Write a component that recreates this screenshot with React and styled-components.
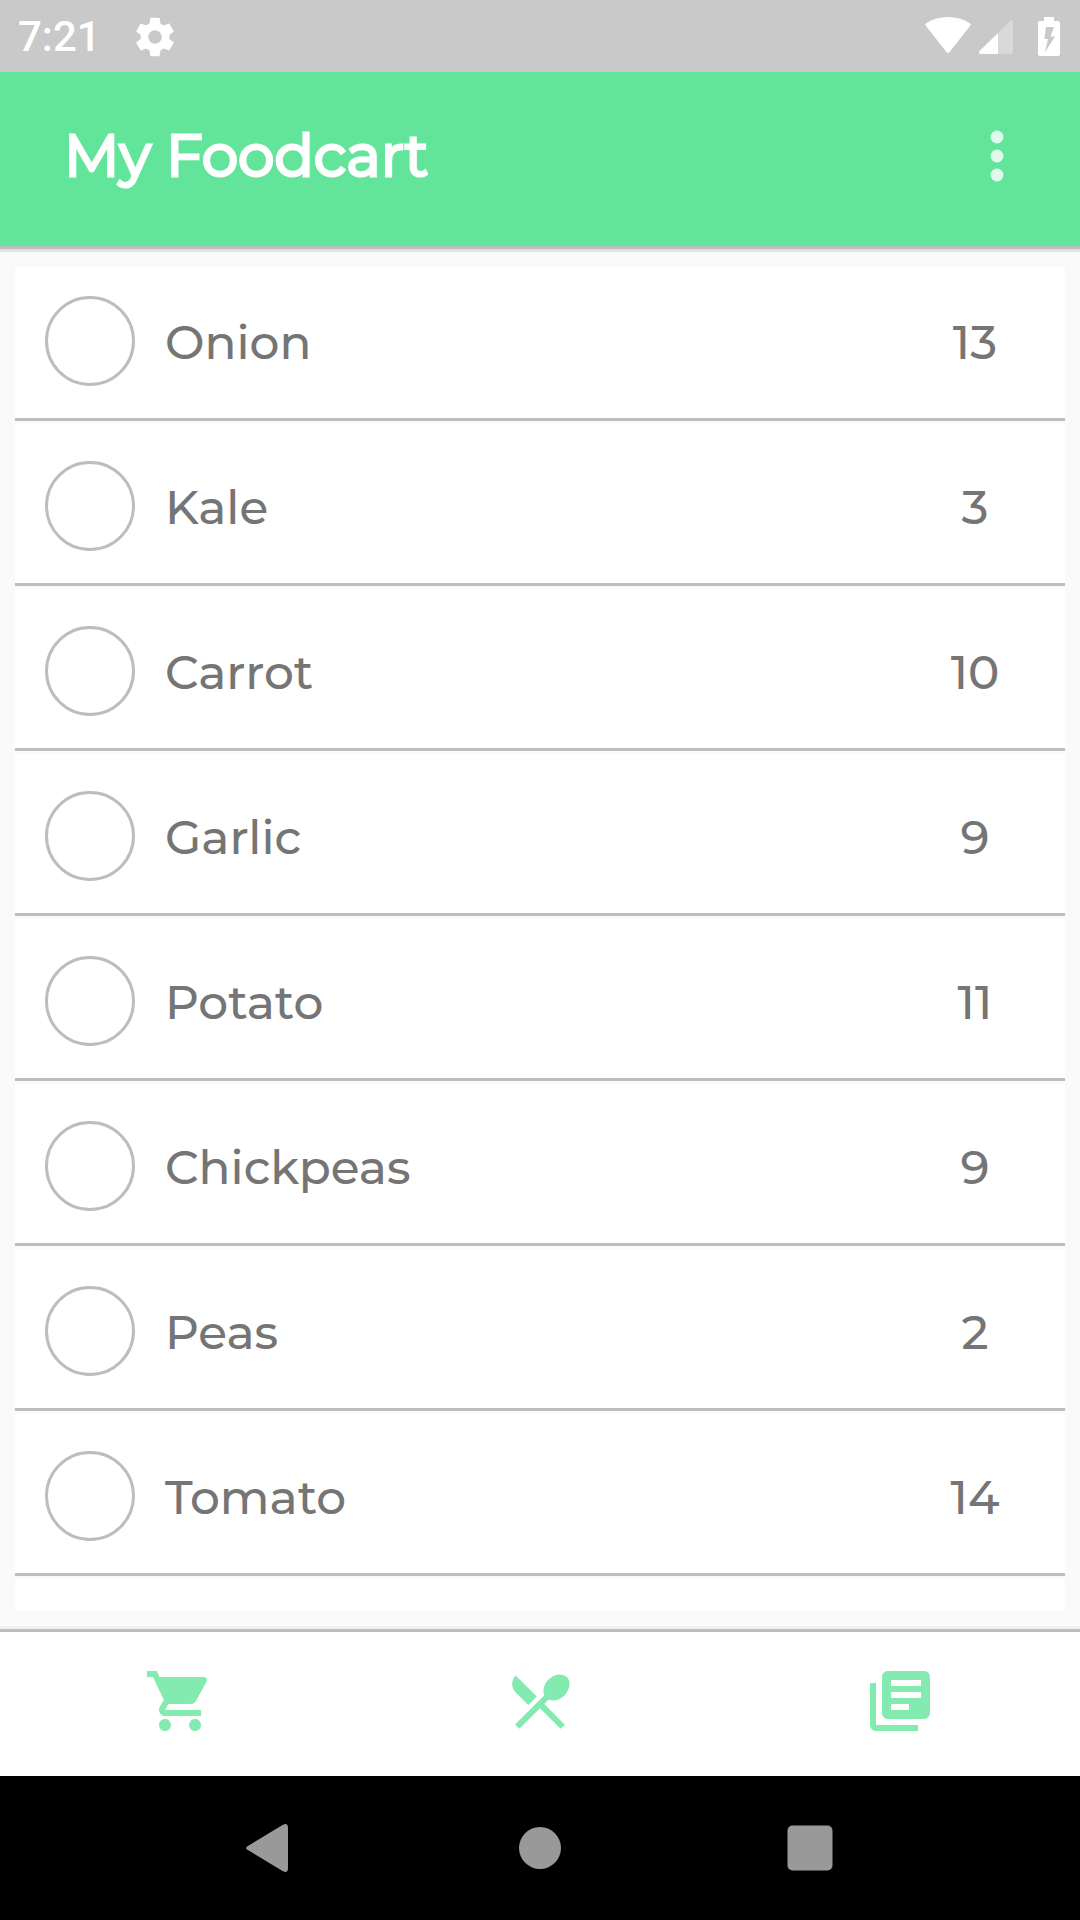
import React from "react";
import styled, { createGlobalStyle } from "styled-components";

const GlobalStyle = createGlobalStyle`
  *, *::before, *::after { box-sizing: border-box; }
  body {
    margin: 0;
    background: #fafafa;
    font-family: Montserrat, Inter, sans-serif;
  }
`;

const Screen = styled.div`
  display: flex;
  flex-direction: column;
  min-height: 100vh;
`;

const StatusBar = styled.div`
  display: flex;
  align-items: center;
  height: 72px;
  padding: 1px 20px 0 18px;
  background: #c9c9c9;
  color: #fff;
`;

const Clock = styled.time`
  flex: 1;
  display: flex;
  align-items: center;
  gap: 31px;
  font: 500 42px/48px Roboto, sans-serif;
`;

const StatusIcons = styled.div`
  display: flex;
  align-items: center;
  gap: 8px;
`;

const Battery = styled.svg`
  margin-left: 16px;
`;

const AppBar = styled.header`
  display: flex;
  align-items: center;
  justify-content: space-between;
  height: 180px;
  padding: 0 47px 10px 64px;
  background: #62e49a;
  border-bottom: 3px solid #e2e2e2;
  box-shadow: inset 0 -3px #bdbdbd;
  color: #fff;
`;

const Title = styled.h1`
  margin: 0;
  font-size: 58px;
  line-height: 72px;
  font-weight: 400;
  -webkit-text-stroke: 3px currentColor;
`;

const IconButton = styled.button`
  display: flex;
  align-items: center;
  justify-content: center;
  width: 72px;
  height: 72px;
  padding: 0;
  border: 0;
  background: none;
  color: inherit;
`;

const Main = styled.main`
  flex: 1;
  display: flex;
  padding: 15px;
`;

const List = styled.ul`
  flex: 1;
  display: flex;
  flex-direction: column;
  gap: 3px;
  margin: 0;
  padding: 0;
  list-style: none;
`;

const Row = styled.li`
  display: flex;
  align-items: center;
  padding: 37px 0 32px 30px;
  background: #fff;
  border-bottom: 3px solid #bdbdbd;
  color: #757575;
  font-size: 47px;
  line-height: 60px;
  font-weight: 500;

  &:first-child {
    padding-top: 29px;
  }
`;

const NextRow = styled.li`
  flex: 1;
  background: #fff;
`;

const ItemLabel = styled.label`
  flex: 1;
  display: flex;
  align-items: center;
  gap: 30px;
`;

const ItemName = styled.span`
  padding-top: 4px;
`;

const Check = styled.input`
  appearance: none;
  width: 90px;
  height: 90px;
  margin: 0;
  border: 3px solid #bdbdbd;
  border-radius: 50%;
  background: #fff;

  &:checked {
    background: #62e49a;
  }
`;

const Quantity = styled.span`
  width: 180px;
  padding-top: 4px;
  text-align: center;
`;

const Tabs = styled.nav`
  display: grid;
  grid-template-columns: repeat(3, 1fr);
  height: 150px;
  padding-bottom: 6px;
  background: #fff;
  border-top: 3px solid #f0f0f0;
  box-shadow: inset 0 3px #bdbdbd;
`;

const Tab = styled.a`
  display: flex;
  align-items: center;
  justify-content: center;
  padding-top: 3px;
  color: #83ebaf;
`;

const SystemBar = styled.div`
  display: grid;
  grid-template-columns: repeat(3, 1fr);
  justify-items: center;
  align-items: center;
  height: 144px;
  padding: 0 12.5%;
  background: #000;
  color: #999;
`;

const items = [
  ["Onion", 13],
  ["Kale", 3],
  ["Carrot", 10],
  ["Garlic", 9],
  ["Potato", 11],
  ["Chickpeas", 9],
  ["Peas", 2],
  ["Tomato", 14],
];

const tabs = [
  {
    name: "Cart",
    path: "M7 18c-1.1 0-1.99.9-1.99 2S5.9 22 7 22s2-.9 2-2-.9-2-2-2zM1 2v2h2l3.6 7.59-1.35 2.45c-.16.28-.25.61-.25.96 0 1.1.9 2 2 2h12v-2H7.42c-.14 0-.25-.11-.25-.25l.03-.12.9-1.63h7.45c.75 0 1.41-.41 1.75-1.03l3.58-6.49c.08-.14.12-.31.12-.48 0-.55-.45-1-1-1H5.21l-.94-2H1zm16 16c-1.1 0-1.99.9-1.99 2s.89 2 1.99 2 2-.9 2-2-.9-2-2-2z",
  },
  {
    name: "Meals",
    path: "M8.1 13.34l2.83-2.83L3.91 3.5c-1.56 1.56-1.56 4.09 0 5.66l4.19 4.18zm6.78-1.81c1.53.71 3.68.21 5.27-1.38 1.91-1.91 2.28-4.65.81-6.12-1.46-1.46-4.2-1.1-6.12.81-1.59 1.59-2.09 3.74-1.38 5.27L3.7 19.87l1.41 1.41L12 14.41l6.88 6.88 1.41-1.41L13.41 13l1.47-1.47z",
  },
  {
    name: "Recipes",
    path: "M4 6H2v14c0 1.1.9 2 2 2h14v-2H4V6zm16-4H8c-1.1 0-2 .9-2 2v12c0 1.1.9 2 2 2h12c1.1 0 2-.9 2-2V4c0-1.1-.9-2-2-2zm-1 5H9V5h10v2zm0 4H9V9h10v2zm-4 4H9v-2h6v2z",
  },
];

const Icon = ({ size, path }) => (
  <svg width={size} height={size} viewBox="0 0 24 24" fill="currentColor" aria-hidden="true">
    <path fillRule="evenodd" d={path} />
  </svg>
);

const GEAR =
  "M19.43 12.98c.04-.32.07-.64.07-.98s-.03-.66-.07-.98l2.11-1.65c.19-.15.24-.42.12-.64l-2-3.46c-.12-.22-.39-.3-.61-.22l-2.49 1c-.52-.4-1.08-.73-1.69-.98l-.38-2.65C14.46 2.18 14.25 2 14 2h-4c-.25 0-.46.18-.49.42l-.38 2.65c-.61.25-1.17.59-1.69.98l-2.49-1c-.23-.09-.49 0-.61.22l-2 3.46c-.13.22-.07.49.12.64l2.11 1.65c-.04.32-.07.65-.07.98s.03.66.07.98l-2.11 1.65c-.19.15-.24.42-.12.64l2 3.46c.12.22.39.3.61.22l2.49-1c.52.4 1.08.73 1.69.98l.38 2.65c.03.24.24.42.49.42h4c.25 0 .46-.18.49-.42l.38-2.65c.61-.25 1.17-.59 1.69-.98l2.49 1c.23.09.49 0 .61-.22l2-3.46c.12-.22.07-.49-.12-.64l-2.11-1.65zM12 15.5c-1.93 0-3.5-1.57-3.5-3.5s1.57-3.5 3.5-3.5 3.5 1.57 3.5 3.5-1.57 3.5-3.5 3.5z";

export default function App() {
  return (
    <>
      <GlobalStyle />
      <Screen>
        <StatusBar>
          <Clock>
            7:21
            <Icon size={46} path={GEAR} />
          </Clock>
          <StatusIcons>
            <svg width="46" height="40" viewBox="0 0 46 40" fill="currentColor" aria-hidden="true">
              <path d="M1 9Q-.4 7.400 1.200 6.200Q10.500 0 23 0t21.800 6.200Q46.400 7.400 45 9L24.600 35Q23 37 21.400 35z" />
            </svg>
            <svg width="35" height="36" viewBox="0 0 35 36" fill="currentColor" aria-hidden="true">
              <path opacity=".3" d="M19 35V14L31 2q3-2.500 3 1v29.500q0 2.500-2 2.500z" />
              <path d="M19 35H2q-3.500-.5-1-3.500L19 14z" />
            </svg>
            <Battery width="22" height="40" viewBox="0 0 22 40" fill="currentColor" aria-hidden="true">
              <path
                fillRule="evenodd"
                d="M6 0h10v4h4q2 0 2 2v31q0 2-2 2H2q-2 0-2-2V6q0-2 2-2h4zM8 10L6.500 22H10L7 35L17 19.500h-4.500L16 10z"
              />
            </Battery>
          </StatusIcons>
        </StatusBar>

        <AppBar>
          <Title>My Foodcart</Title>
          <IconButton type="button" aria-label="More options">
            <svg width="14" height="52" viewBox="0 0 14 52" fill="currentColor" opacity=".8">
              <circle cx="7" cy="7" r="6.500" />
              <circle cx="7" cy="26" r="6.500" />
              <circle cx="7" cy="45" r="6.500" />
            </svg>
          </IconButton>
        </AppBar>

        <Main>
          <List>
            {items.map(([name, quantity]) => (
              <Row key={name}>
                <ItemLabel>
                  <Check type="checkbox" />
                  <ItemName>{name}</ItemName>
                </ItemLabel>
                <Quantity>{quantity}</Quantity>
              </Row>
            ))}
            <NextRow aria-hidden="true" />
          </List>
        </Main>

        <Tabs>
          {tabs.map(({ name, path }) => (
            <Tab key={name} href={`#${name.toLowerCase()}`} aria-label={name}>
              <Icon size={72} path={path} />
            </Tab>
          ))}
        </Tabs>

        <SystemBar>
          <IconButton type="button" aria-label="Back">
            <svg width="48" height="48" viewBox="0 0 48 48" fill="currentColor">
              <path d="M1.500 22.200L37 .8Q42-1.500 42 4v40q0 5.500-5 3.200L1.500 25.800q-3-1.800 0-3.600z" />
            </svg>
          </IconButton>
          <IconButton type="button" aria-label="Home">
            <svg width="42" height="42" viewBox="0 0 42 42" fill="currentColor">
              <circle cx="21" cy="21" r="21" />
            </svg>
          </IconButton>
          <IconButton type="button" aria-label="Recent apps">
            <svg width="46" height="46" viewBox="0 0 46 46" fill="currentColor">
              <rect x=".5" y=".5" width="45" height="45" rx="5" />
            </svg>
          </IconButton>
        </SystemBar>
      </Screen>
    </>
  );
}
